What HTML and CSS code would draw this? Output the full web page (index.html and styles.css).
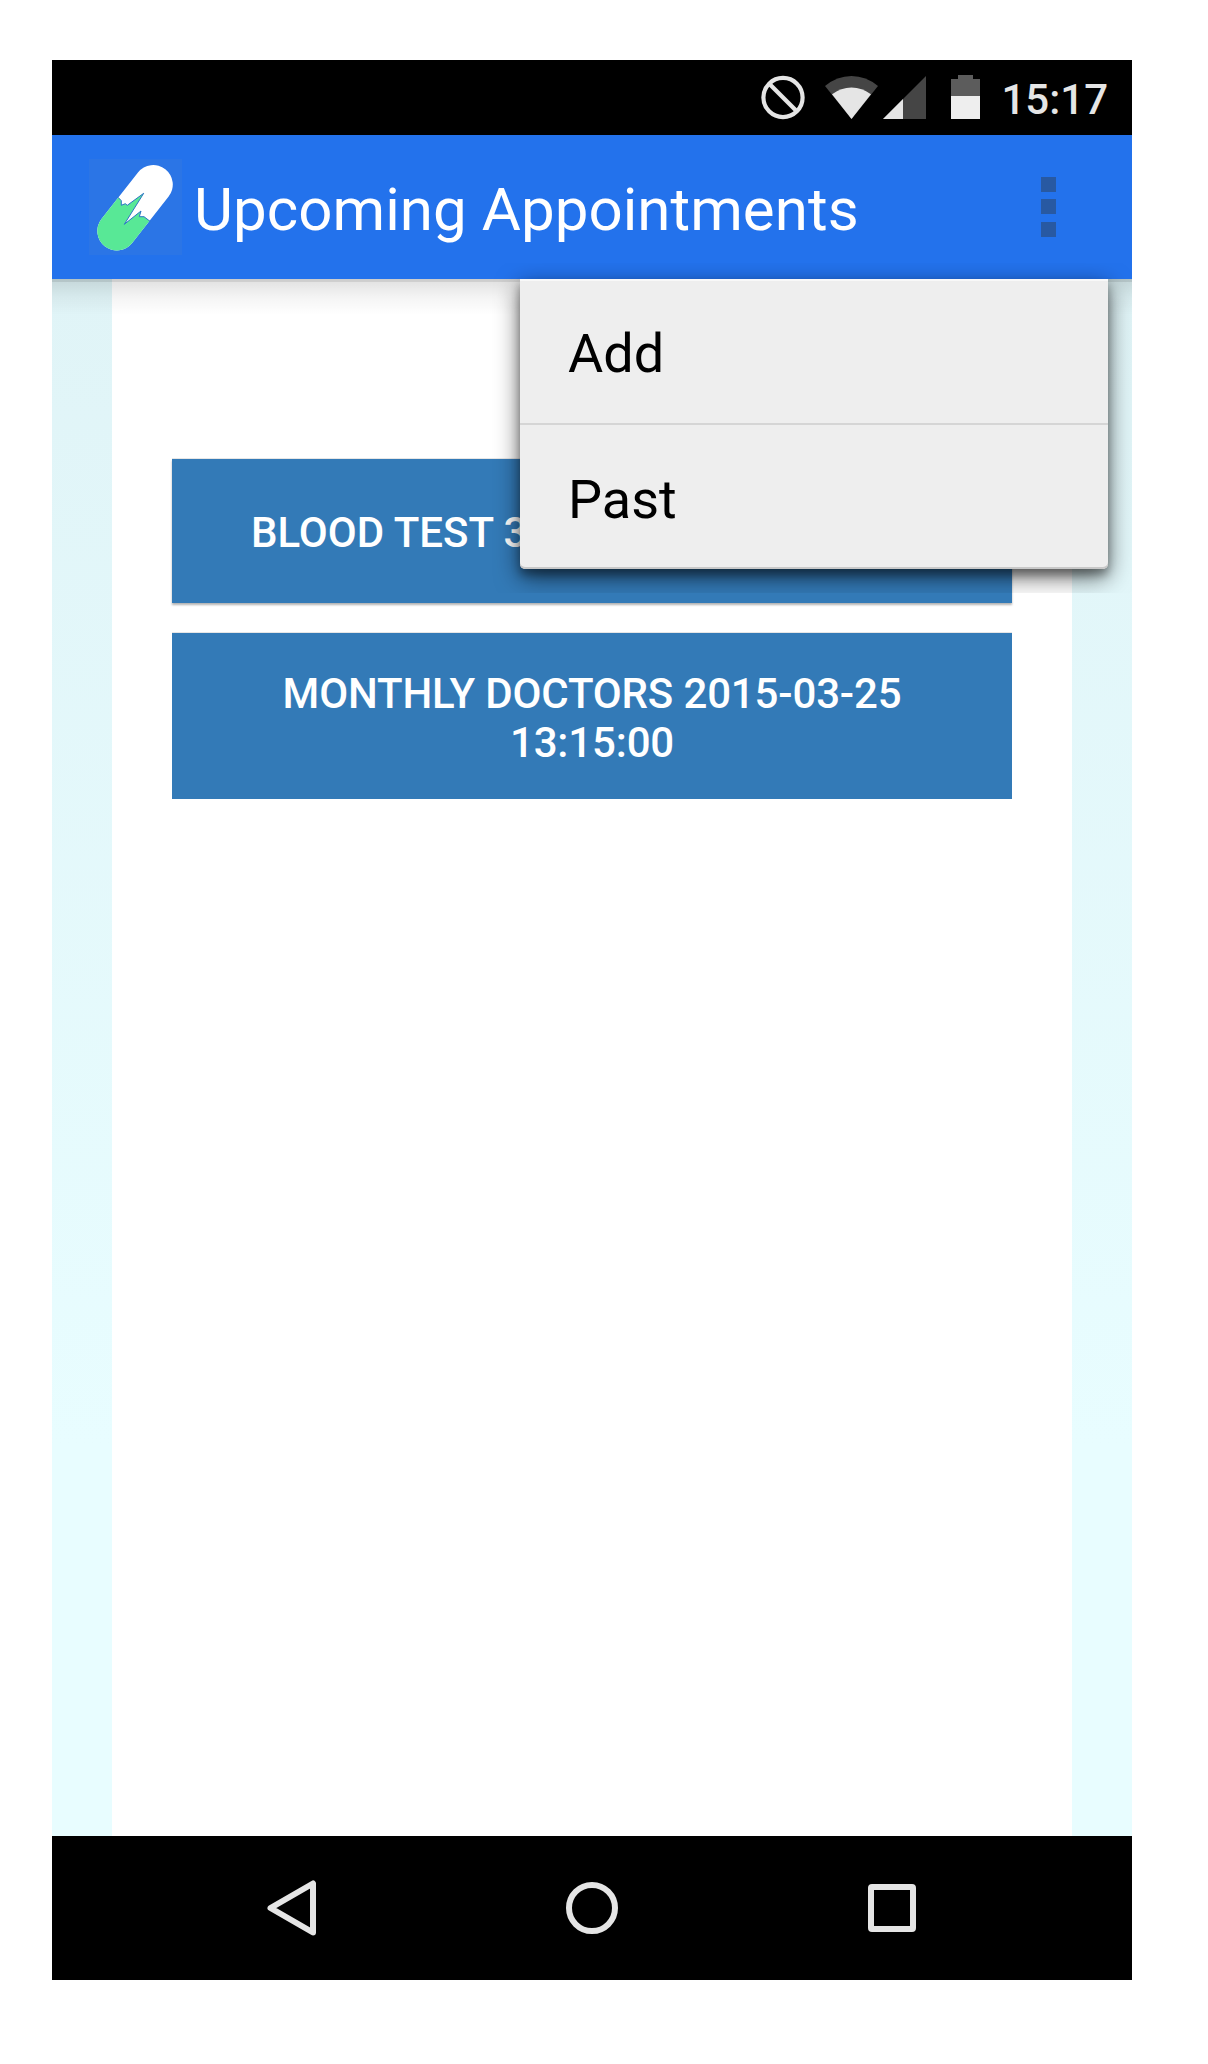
FILE: index.html
```html
<!DOCTYPE html>
<html lang="en">
<head>
<meta charset="utf-8">
<title>Upcoming Appointments</title>
<link rel="stylesheet" href="styles.css">
</head>
<body>
<div class="phone">
  <div class="status-bar">
    <svg class="status-icons" width="222" height="50" viewBox="760 72 222 50">
      <g fill="none" stroke="#e5e5e5" stroke-width="4.2">
        <circle cx="783" cy="97.5" r="19.6"/>
        <path d="M769 83.500l28 28"/>
      </g>
      <path fill="#454545" d="M851.500 119L825 86Q837 76 851.500 76T878 86Z"/>
      <path fill="#e5e5e5" d="M851.500 119L832 94.300Q841 87.500 851.500 87.500T871 94.300Z"/>
      <path fill="#454545" d="M883 119H926V76Z"/>
      <path fill="#e5e5e5" d="M883 119H903V99Z"/>
      <path fill="#5c5c5c" d="M951 79h7v-4h15v4h7v17h-29Z"/>
      <path fill="#eee" d="M951 96h29v23h-29Z"/>
    </svg>
    <span class="clock">15:17</span>
  </div>
  <header class="action-bar">
    <svg class="logo" width="93" height="96" viewBox="89 159 93 96">
      <clipPath id="lower-half">
        <path d="M119 198.300L121.300 200.700V205.300L125.300 203.700L127.300 205.300L143.700 193.300L124.300 224.300L141 211L139.300 216.700H144L149.300 220.700L200 270H80V180Z"/>
      </clipPath>
      <path d="M153.300 184.500L116.800 231" stroke="#fff" stroke-width="39" stroke-linecap="round"/>
      <path d="M153.300 184.500L116.800 231" stroke="#58e896" stroke-width="39" stroke-linecap="round" clip-path="url(#lower-half)"/>
      <path d="M118 197.300L121.300 200.700V205.300L125.300 203.700L127.300 205.300L143.700 193.300L124.300 224.300L141 211L139.300 216.700H144L150.300 221.500" fill="none" stroke="#2b75c4" stroke-width="1"/>
    </svg>
    <h1 class="title">Upcoming Appointments</h1>
    <button class="overflow" aria-label="More options">
      <svg width="15" height="60" viewBox="0 0 15 60" fill="#2859a2"><path d="M0 0h15v15H0zM0 22h15v15H0zM0 45h15v15H0z"/></svg>
    </button>
  </header>
  <main class="content">
    <div class="appointments">
      <button class="appointment single">BLOOD TEST 3</button>
      <button class="appointment">MONTHLY DOCTORS 2015-03-25 13:15:00</button>
    </div>
    <div class="menu-shade">
      <nav class="menu">
        <a class="menu-item">Add</a>
        <a class="menu-item">Past</a>
      </nav>
    </div>
  </main>
  <footer class="nav-bar">
    <svg class="nav-icon" viewBox="0 0 60 60"><path d="M8.500 30L51 5.500V54.500Z"/></svg>
    <svg class="nav-icon" viewBox="0 0 60 60"><circle cx="30" cy="30" r="23"/></svg>
    <svg class="nav-icon" viewBox="0 0 60 60"><rect x="9" y="9" width="42" height="42" rx="1"/></svg>
  </footer>
</div>
</body>
</html>
```

FILE: styles.css
```css
* { box-sizing: border-box; }
body {
  margin: 0;
  height: 2064px;
  padding: 60px 76px 84px 52px;
  background: #fff;
  font-family: Roboto, sans-serif;
}
button { border: 0; padding: 0; background: none; font: inherit; }
.phone {
  display: flex;
  flex-direction: column;
  width: 1080px;
  height: 1920px;
}
.status-bar {
  display: flex;
  align-items: center;
  justify-content: flex-end;
  height: 75px;
  padding-right: 24px;
  background: #000;
}
.status-icons { margin: 0 19px 2px 0; }
.clock {
  color: #e5e5e5;
  font-size: 42px;
  font-weight: 500;
  line-height: 49px;
  padding-top: 4px;
}
.action-bar {
  display: flex;
  align-items: center;
  height: 144px;
  padding: 0 76px 0 37px;
  background: #2372ec;
}
.logo { background: #2b75e6; }
.title {
  flex: 1;
  margin: 0;
  padding: 5px 0 0 12px;
  color: #fff;
  font-size: 60px;
  font-weight: 400;
  line-height: 72px;
  letter-spacing: 0.06px;
}
.overflow { height: 60px; }
.overflow svg { display: block; }
.content {
  position: relative;
  flex: 1;
  padding: 0 60px;
  background: linear-gradient(#e0f4f7, #e8fdff 75%);
}
/* Drop shadow of the action bar */
.content::before {
  content: "";
  position: absolute;
  inset: 0 0 auto;
  height: 36px;
  background:
    linear-gradient(rgba(0,0,0,.09), rgba(0,0,0,.09)) top / 100% 3px no-repeat,
    linear-gradient(rgba(0,0,0,.12), rgba(0,0,0,.045) 50%, transparent);
}
.appointments {
  display: flex;
  flex-direction: column;
  gap: 30px;
  height: 100%;
  padding: 180px 60px 0;
  background: #fff;
}
.appointment {
  height: 166px;
  padding: 3px 96px 0;
  background: #337ab7;
  color: #fff;
  font-size: 42px;
  font-weight: 500;
  line-height: 49px;
  letter-spacing: -0.15px;
  box-shadow: 0 -1px 0 #e6e6e6;
}
.appointment.single {
  height: 144px;
  padding: 2px 0 0 79px;
  letter-spacing: 0;
  text-align: left;
  box-shadow: 0 -1px 0 #e6e6e6, 0 2px 2px rgba(0,0,0,.3);
}
.menu-shade {
  position: absolute;
  top: -16px;
  right: 0;
  width: 640px;
  height: 330px;
  padding: 16px 24px 24px 28px;
  overflow: hidden;
}
.menu {
  height: 290px;
  border-radius: 0 0 5px 5px;
  background: #eee;
  box-shadow: 0 8px 24px rgba(0,0,0,.6), 0 6px 8px rgba(0,0,0,.3), inset 0 -2px 0 #c8c8c8, inset 0 2px 0 #f8f8f8;
}
.menu-item {
  display: flex;
  align-items: center;
  height: 144px;
  padding: 5px 0 0 48px;
  color: #000;
  font-size: 54px;
  line-height: 64px;
}
.menu-item + .menu-item {
  height: 146px;
  border-top: 2px solid #d5d5d5;
}
.nav-bar {
  display: flex;
  align-items: center;
  justify-content: center;
  gap: 240px;
  height: 144px;
  background: #000;
}
.nav-icon {
  width: 60px;
  height: 60px;
  fill: none;
  stroke: #e5e5e5;
  stroke-width: 6;
  stroke-linejoin: round;
}
```
